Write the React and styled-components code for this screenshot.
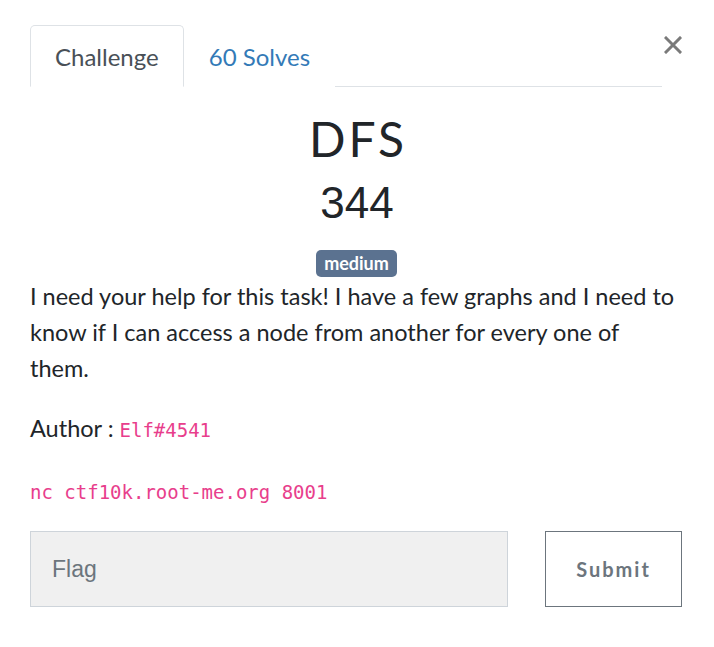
import React from 'react'
import styled, { createGlobalStyle } from 'styled-components'

const Global = createGlobalStyle`
  body {
    margin: 0;
    background: #fff;
    font-family: Lato, "Noto Sans", sans-serif;
    color: #212529;
  }
`

function App() {
  return (
    <>
      <Global />
      <Modal>
        <Header>
          <Tabs>
            <Tab active>Challenge</Tab>
            <Tab>60 Solves</Tab>
          </Tabs>
          <Close aria-label="close">
            <svg width="18" height="18" viewBox="0 0 18 18">
              <path d="M2 2 L16 16 M16 2 L2 16" stroke="#7a7a7a" strokeWidth="3" strokeLinecap="square" />
            </svg>
          </Close>
        </Header>
        <Title>DFS</Title>
        <Points>344</Points>
        <BadgeRow>
          <Badge>medium</Badge>
        </BadgeRow>
        <Description>
          I need your help for this task! I have a few graphs and I need to know if I can access a node from another for every one of them.
        </Description>
        <Author>
          Author : <Code>Elf#4541</Code>
        </Author>
        <Command>nc ctf10k.root-me.org 8001</Command>
        <Form>
          <FlagInput placeholder="Flag" />
          <SubmitButton>Submit</SubmitButton>
        </Form>
      </Modal>
    </>
  )
}

export default App

const Modal = styled.div`
    padding: 25px 32px 0 30px;
`
const Header = styled.div`
    display: flex;
    align-items: flex-start;
`
const Tabs = styled.div`
    display: flex;
    flex: 1;
    border-bottom: 1px solid #dee2e6;
    margin-right: 2px;
`
const Tab = styled.div`
    height: 60px;
    padding: 0 24px 0 24px;
    display: flex;
    align-items: center;
    font-size: 24px;
    margin-bottom: -1px;
    border: 1px solid ${p => p.active ? '#dee2e6' : 'transparent'};
    border-bottom-color: ${p => p.active ? '#fff' : 'transparent'};
    border-radius: 5px 5px 0 0;
    background: #fff;
    color: ${p => p.active ? '#495057' : '#337ab7'};
`
const Close = styled.div`
    width: 18px;
    height: 18px;
    margin-top: 11px;
    display: flex;
`
const Title = styled.h2`
    margin: 22px 0 0;
    text-align: center;
    font-weight: 400;
    font-size: 48px;
    letter-spacing: 3px;
    line-height: 60px;
    padding-left: 4px;
`
const Points = styled.h3`
    margin: 8px 0 0;
    text-align: center;
    font-family: "Liberation Sans", Arial, sans-serif;
    font-weight: 400;
    font-size: 44px;
    line-height: 52px;
    padding-left: 2px;
`
const BadgeRow = styled.div`
    display: flex;
    justify-content: center;
    margin-top: 21px;
    padding-left: 1px;
`
const Badge = styled.span`
    background: #5b7290;
    color: #fff;
    font-weight: 700;
    font-size: 18px;
    line-height: 27px;
    padding: 0 8px;
    border-radius: 5px;
`
const Description = styled.p`
    margin: 1px 6px 0 0;
    font-size: 23.5px;
    line-height: 36px;
`
const Author = styled.p`
    margin: 24px 0 0;
    font-size: 23.5px;
    line-height: 36px;
`
const Code = styled.code`
    font-family: "DejaVu Sans Mono", monospace;
    font-size: 19px;
    color: #e83e8c;
`
const Command = styled.p`
    margin: 32px 0 0;
    font-family: "DejaVu Sans Mono", monospace;
    font-size: 19px;
    line-height: 24px;
    color: #e83e8c;
`
const Form = styled.div`
    display: flex;
    gap: 37px;
    margin-top: 27px;
`
const FlagInput = styled.input`
    flex: 1;
    height: 76px;
    box-sizing: border-box;
    background: #f0f0f0;
    border: 1px solid #ced4da;
    padding: 0 21px;
    font-family: "Liberation Sans", Arial, sans-serif;
    font-size: 23px;
    color: #495057;
    outline: none;
    &::placeholder {
        color: #6c757d;
    }
`
const SubmitButton = styled.button`
    width: 137px;
    height: 76px;
    box-sizing: border-box;
    background: #fff;
    border: 1px solid #6c757d;
    color: #6c757d;
    font-family: Lato, sans-serif;
    font-weight: 700;
    font-size: 20px;
    letter-spacing: 2px;
`
